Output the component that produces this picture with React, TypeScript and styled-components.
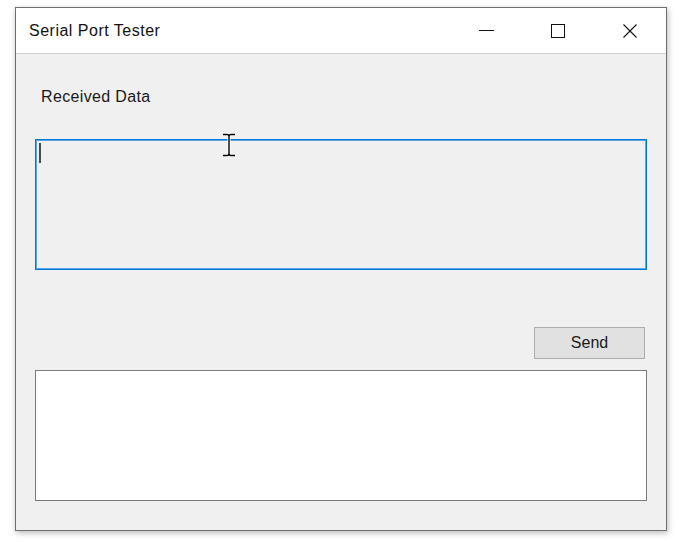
import styled, { createGlobalStyle } from "styled-components";

const Global = createGlobalStyle`
  html, body {
    margin: 0;
    padding: 0;
    background: #ffffff;
  }
  body {
    font-family: "Liberation Sans", Arial, sans-serif;
  }
`;

const Desk = styled.div`
  padding: 7px 0 0 15px;
  height: 542px;
  box-sizing: border-box;
`;

const Window = styled.div`
  width: 652px;
  height: 524px;
  box-sizing: border-box;
  border: 1px solid #6f6f6f;
  background: #f0f0f0;
  box-shadow: 1px 2px 6px rgba(0, 0, 0, 0.28);
  display: flex;
  flex-direction: column;
`;

const TitleBar = styled.div`
  height: 46px;
  box-sizing: border-box;
  flex-shrink: 0;
  background: #ffffff;
  border-bottom: 1px solid #cfcfcf;
  display: flex;
  align-items: center;
`;

const Title = styled.div`
  flex: 1;
  padding: 1px 0 0 13px;
  font-size: 16px;
  letter-spacing: 0.5px;
  color: #111;
`;

const CaptionBtn = styled.div`
  width: 72px;
  height: 45px;
  display: flex;
  align-items: center;
  justify-content: center;
`;

const Body = styled.div`
  flex: 1;
  position: relative;
  padding: 33px 19px 0 19px;
  display: flex;
  flex-direction: column;
`;

const Label = styled.div`
  font-size: 16px;
  letter-spacing: 0.35px;
  color: #1a1a1a;
  padding-left: 6px;
  line-height: 20px;
`;

const Spacer = styled.div`
  height: 32px;
`;

const TextBox = styled.div<{ $focused?: boolean }>`
  position: relative;
  flex-shrink: 0;
  height: 131px;
  box-sizing: border-box;
  border: 1px solid ${(p) => (p.$focused ? "#0078d7" : "#7a7a7a")};
  box-shadow: inset 0 0 0 1px ${(p) => (p.$focused ? "#5aa5e6" : "transparent")};
  background: ${(p) => (p.$focused ? "#f0f0f0" : "#ffffff")};
`;

const Caret = styled.div`
  position: absolute;
  left: 3px;
  top: 3px;
  width: 2px;
  height: 20px;
  background: #4a4a4a;
`;

const ButtonRow = styled.div`
  display: flex;
  justify-content: flex-end;
  padding: 57px 2px 11px 0;
`;

const Button = styled.button`
  width: 111px;
  height: 32px;
  box-sizing: border-box;
  border: 1px solid #adadad;
  background: #e1e1e1;
  font-family: "Liberation Sans", Arial, sans-serif;
  font-size: 16px;
  color: #1a1a1a;
  padding: 0;
`;

const Pointer = styled.svg`
  position: absolute;
  left: 206px;
  top: 79px;
`;

export default function App() {
  return (
    <>
      <Global />
      <Desk>
        <Window>
          <TitleBar>
            <Title>Serial Port Tester</Title>
            <CaptionBtn>
              <svg width="15" height="2" viewBox="0 0 15 2">
                <rect x="0" y="0" width="15" height="1" fill="#111" />
              </svg>
            </CaptionBtn>
            <CaptionBtn>
              <svg width="14" height="14" viewBox="0 0 14 14">
                <rect x="0.5" y="0.5" width="13" height="13" fill="none" stroke="#111" strokeWidth="1" />
              </svg>
            </CaptionBtn>
            <CaptionBtn>
              <svg width="14" height="14" viewBox="0 0 14 14">
                <path d="M0.5 0.5 L13.5 13.5 M13.5 0.5 L0.5 13.5" stroke="#111" strokeWidth="1.1" />
              </svg>
            </CaptionBtn>
          </TitleBar>
          <Body>
            <Label>Received Data</Label>
            <Spacer />
            <TextBox $focused>
              <Caret />
            </TextBox>
            <ButtonRow>
              <Button>Send</Button>
            </ButtonRow>
            <TextBox />
            <Pointer width="14" height="24" viewBox="0 0 14 24">
              <path
                d="M1 1.5 H5 Q7 1.5 7 3.5 Q7 1.5 9 1.5 H13 M7 3.5 V20.5 M1 22.5 H5 Q7 22.5 7 20.5 Q7 22.5 9 22.5 H13"
                fill="none"
                stroke="#ffffff"
                strokeWidth="3"
              />
              <path
                d="M1 1.5 H5 Q7 1.5 7 3.5 Q7 1.5 9 1.5 H13 M7 3.5 V20.5 M1 22.5 H5 Q7 22.5 7 20.5 Q7 22.5 9 22.5 H13"
                fill="none"
                stroke="#000000"
                strokeWidth="1.4"
              />
            </Pointer>
          </Body>
        </Window>
      </Desk>
    </>
  );
}
